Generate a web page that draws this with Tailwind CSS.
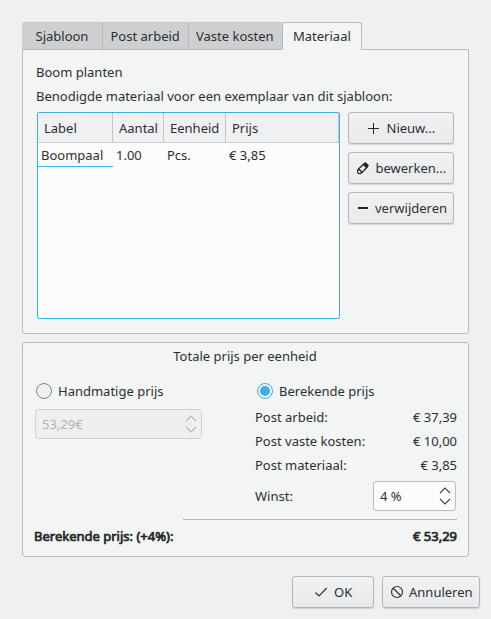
<!DOCTYPE html>
<html lang="nl">
<head>
<meta charset="utf-8">
<title>Sjabloon</title>
<script src="https://cdn.jsdelivr.net/npm/@tailwindcss/browser@4"></script>
</head>
<body class="h-[619px] w-[491px] overflow-hidden bg-[#eff0f1] pl-[22px] pt-[22px] font-['Noto_Sans',sans-serif] text-[13px] leading-6 text-[#2b2f33] whitespace-nowrap">
  <nav class="relative z-10 flex h-[28px]">
    <div class="h-[28px] w-[81px] rounded-tl-[3px] border-r border-b border-t border-[#b5b7b8] border-t-[#c5c7c8] bg-[#cdcfd0] pl-[13.500px] pt-px">Sjabloon</div>
    <div class="h-[28px] w-[86px] border-r border-b border-t border-[#b5b7b8] border-t-[#c5c7c8] bg-[#cdcfd0] pl-[7.500px] pt-px">Post arbeid</div>
    <div class="h-[28px] w-[93px] border-b border-t border-[#b5b7b8] border-t-[#c5c7c8] bg-[#cdcfd0] pl-[7px] pt-px">Vaste kosten</div>
    <div class="h-[28px] w-[80px] rounded-t-[3px] border border-b-0 border-[#b9bbbc] bg-[#f3f5f4] pl-[10px] pt-[1px]">Materiaal</div>
  </nav>

  <main class="-mt-px h-[285px] w-[447px] rounded-b-[3px] border border-[#b9bbbc] bg-[#f3f5f4] pl-[13px] pt-[10px]">
    <p>Boom planten</p>
    <p>Benodigde materiaal voor een exemplaar van dit sjabloon:</p>
    <div class="mt-[4px] flex gap-2 pl-px">
      <div class="h-[207px] w-[303px] rounded-[2px] border border-[#3daee9] bg-[#fcfcfc]">
        <div class="flex h-[30px] w-[301px] border-b border-[#c9cbcc] bg-[#eff0f1] pt-0">
          <div class="w-[75px] border-r border-[#c2c4c6] pl-[6px] pt-[3px]">Label</div>
          <div class="w-[51px] border-r border-[#c2c4c6] pl-[6px] pt-[3px]">Aantal</div>
          <div class="w-[62px] border-r border-[#c2c4c6] pl-[6px] pt-[3px]">Eenheid</div>
          <div class="w-[113px] border-r border-[#c2c4c6] pl-[6px] pt-[3px]">Prijs</div>
        </div>
        <div class="flex h-[24px]">
          <div class="w-[75px] border-b border-[#3daee9] pl-[3px]">Boompaal</div>
          <div class="w-[51px] pl-[3px]">1.00</div>
          <div class="w-[62px] pl-[3px]">Pcs.</div>
          <div class="pl-[3px]">€ 3,85</div>
        </div>
      </div>
      <div class="flex flex-col gap-2">
        <button class="flex h-8 w-[106px] items-center rounded-[3px] border border-[#b4b6b8] bg-linear-to-b from-[#f1f2f3] to-[#e8e9ea] pl-[16px] shadow-[0_1px_1px_#00000026]">
          <svg class="mr-[5.500px] size-4" viewBox="0 0 16 16" fill="none" stroke="#232629"><path d="M8.500 3v11M3 8.500h11"/></svg>Nieuw...
        </button>
        <button class="flex h-8 w-[106px] items-center rounded-[3px] border border-[#b4b6b8] bg-linear-to-b from-[#f1f2f3] to-[#e8e9ea] pl-[6px] shadow-[0_1px_1px_#00000026]">
          <svg class="mr-[4.500px] size-4" viewBox="0 0 16 16" fill="none" stroke="#232629" stroke-width="1.300"><path d="M9 3.800L3 9.500Q1.900 11.500 3 13Q4.500 14.200 6.500 13L12.300 7M3.500 9.500Q6 10 6.500 12.500"/><path d="M7.500 4.500L10.500 2 14 5.500 11.500 8.500z" fill="#232629" stroke="none"/></svg>bewerken...
        </button>
        <button class="flex h-8 w-[106px] items-center rounded-[3px] border border-[#b4b6b8] bg-linear-to-b from-[#f1f2f3] to-[#e8e9ea] pl-[6px] shadow-[0_1px_1px_#00000026]">
          <svg class="mr-[4px] size-4" viewBox="0 0 16 16"><path d="M3 7h10v2H3z" fill="#232629"/></svg>verwijderen
        </button>
      </div>
    </div>
  </main>

  <section class="mt-2 h-[215px] w-[447px] rounded-[3px] border border-[#b9bbbc] bg-[#f3f5f4] pl-[11px] pr-[11px]">
    <h2 class="-ml-px pt-px text-center">Totale prijs per eenheid</h2>
    <div class="mt-[11px] flex">
      <div class="w-[220px]">
        <label class="flex h-6 items-center pl-[2px]"><svg class="mr-[6px] size-4" viewBox="0 0 16 16"><circle cx="8" cy="8" r="7.500" fill="#eff0f1" stroke="#7f8387"/></svg>Handmatige prijs</label>
        <div class="ml-px mt-[6px] flex h-[30px] w-[167px] items-center justify-between rounded-[3px] border border-[#cfd1d2] bg-[#efefef] pl-[6px] pr-[4px] text-[#b1b3b4]">53,29€
          <svg class="h-[20px] w-[12px]" viewBox="0 0 12 20" fill="none" stroke="#b1b3b4" stroke-width="1.100"><path d="M1 7l5-5 5 5M1 13l5 5 5-5"/></svg>
        </div>
      </div>
      <div class="w-[203px]">
        <label class="flex h-6 items-center pl-[3px]"><svg class="mr-[6px] size-4" viewBox="0 0 16 16"><circle cx="8" cy="8" r="7.500" fill="#f3f5f4" stroke="#3daee9"/><circle cx="8" cy="8" r="5" fill="#3daee9"/></svg>Berekende prijs</label>
        <div class="mt-[2px] flex justify-between pl-px"><span>Post arbeid:</span><span>€ 37,39</span></div>
        <div class="flex justify-between pl-px"><span>Post vaste kosten:</span><span>€ 10,00</span></div>
        <div class="flex justify-between pl-px"><span>Post materiaal:</span><span>€ 3,85</span></div>
        <div class="mt-[4px] flex h-[30px] items-center justify-between pl-px pr-px"><span>Winst:</span>
          <div class="flex h-[30px] w-[83px] items-center justify-between rounded-[3px] border border-[#b9bbbc] bg-[#fcfcfc] pl-[6px] pr-[4px]">4 %
            <svg class="h-[20px] w-[12px]" viewBox="0 0 12 20" fill="none" stroke="#3d4246" stroke-width="1.100"><path d="M1 7l5-5 5 5M1 13l5 5 5-5"/></svg>
          </div>
        </div>
      </div>
    </div>
    <div class="ml-[149px] mt-[8px] h-px w-[274px] bg-[#b9bbbc]"></div>
    <div class="mt-[4px] flex w-[423px] justify-between text-[#232629] [-webkit-text-stroke:0.7px_#232629]"><span>Berekende prijs: (+4%):</span><span>€ 53,29</span></div>
  </section>

  <footer class="mt-[19px] flex gap-2 pl-[270px]">
    <button class="flex h-8 w-[82px] items-center rounded-[3px] border border-[#b4b6b8] bg-linear-to-b from-[#f1f2f3] to-[#e8e9ea] pl-[20px] shadow-[0_1px_1px_#00000026]">
      <svg class="mr-[5px] size-4" viewBox="0 0 16 16" fill="none" stroke="#31363b" stroke-width="1.200"><path d="M2.500 8.500l3.500 3.500L13.800 4"/></svg>OK
    </button>
    <button class="flex h-8 w-[98px] items-center rounded-[3px] border border-[#b4b6b8] bg-linear-to-b from-[#f1f2f3] to-[#e8e9ea] pl-[6px] shadow-[0_1px_1px_#00000026]">
      <svg class="mr-[4px] size-4" viewBox="0 0 16 16" fill="none" stroke="#31363b" stroke-width="1.200"><circle cx="8" cy="8" r="5.500"/><path d="M4 4l8 8"/></svg>Annuleren
    </button>
  </footer>
</body>
</html>
